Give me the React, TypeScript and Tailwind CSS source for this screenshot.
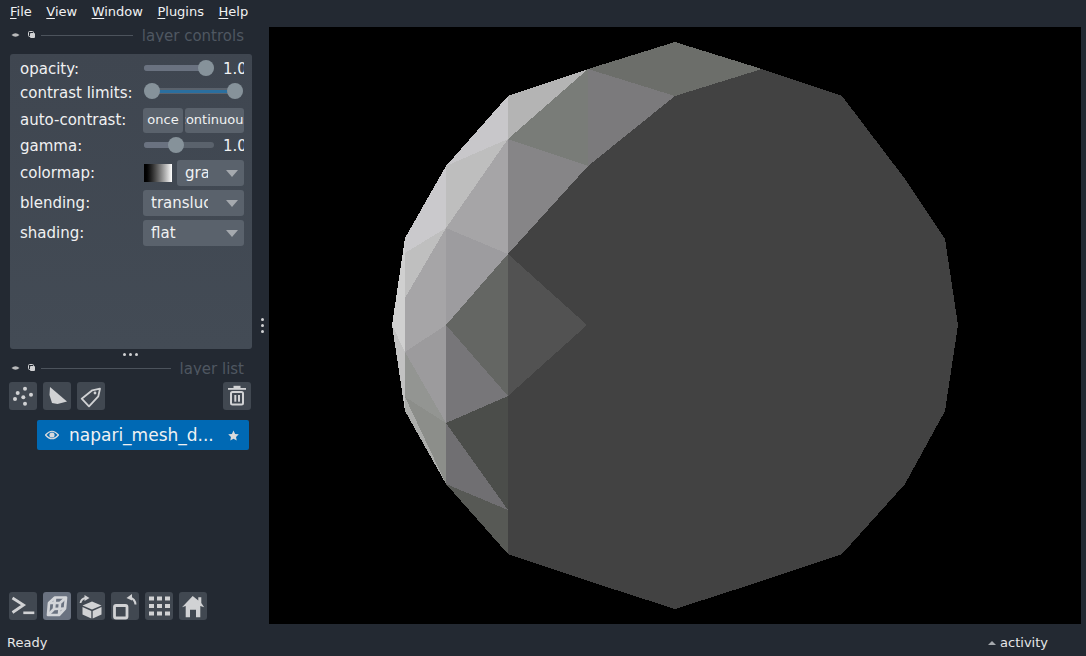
import type { ReactNode } from 'react';

const faces: [string, string][] = [
  ['588,69 675,42 762,69 675,96', '#6c6e6a'],
  ['588,69 675,96 588,166', '#7b7a7c'],
  ['508,139 588,69 588,166', '#797c78'],
  ['508,96 588,69 508,139', '#b4b4b4'],
  ['446,166 508,96 508,139', '#c8c7ca'],
  ['446,166 508,139 446,228', '#bebebe'],
  ['446,228 508,139 508,254', '#a6a5a7'],
  ['508,139 588,166 508,254', '#868587'],
  ['405,238 446,166 446,228 405,253', '#cac9cc'],
  ['405,253 446,228 405,298', '#bfbfbf'],
  ['405,298 446,228 446,325', '#a6a5a7'],
  ['446,228 508,254 446,325', '#9d9c9f'],
  ['446,325 508,254 508,396', '#646663'],
  ['508,254 587,325 508,396', '#525252'],
  ['405,298 446,325 405,352', '#a6a5a7'],
  ['392,325 405,238 405,352', '#d0d0d0'],
  ['405,352 446,325 446,423', '#9c9b9d'],
  ['446,325 508,396 446,423', '#777679'],
  ['405,352 446,423 405,397', '#939592'],
  ['392,325 405,352 405,397 405,411', '#c2c2c2'],
  ['405,397 446,423 446,484', '#8c8e8a'],
  ['405,397 446,484 405,411', '#acadab'],
  ['446,423 508,396 508,510', '#4b4d4a'],
  ['446,423 508,510 446,484', '#706f72'],
  ['446,484 508,510 508,554', '#575955'],
];

const outline =
  '675,42 762,69 842,96 905,179 945,239 958,325 945,411 905,484 842,554 762,581 675,609 588,581 508,554 446,484 405,411 392,325 405,238 446,166 508,96 588,69';

function MenuItem({ mark, rest }: { mark: string; rest: string }) {
  return (
    <span>
      <span className="underline underline-offset-2">{mark}</span>
      {rest}
    </span>
  );
}

function Glyph({ children, active }: { children: ReactNode; active?: boolean }) {
  return (
    <button className={`w-[28px] h-[28px] rounded-[3px] flex items-center justify-center ${active ? 'bg-[#6a7280]' : 'bg-[#414851]'}`}>
      <svg width="28" height="28" viewBox="0 0 28 28" fill="#d1d2d4">
        {children}
      </svg>
    </button>
  );
}

function Row({ label, className, children }: { label: string; className: string; children: ReactNode }) {
  return (
    <div className={`flex items-center ${className}`}>
      <span className="w-[123px] shrink-0 whitespace-nowrap">{label}</span>
      {children}
    </div>
  );
}

function Slider({ value, shown }: { value: number; shown: string }) {
  return (
    <>
      <div className="relative ml-[1px] mb-[2px] w-[70px] h-[6px] rounded-full bg-[#5a626c] shrink-0">
        <div className="h-full rounded-full bg-[#6a7280]" style={{ width: value }} />
        <div className="absolute top-[-5px] w-[16px] h-[16px] rounded-full bg-[#86929a]" style={{ left: value - 8 }} />
      </div>
      <div className="ml-[9px] w-[21px] overflow-hidden whitespace-nowrap">{shown}</div>
    </>
  );
}

function Combo({ text, textWidth, className }: { text: string; textWidth: string; className: string }) {
  return (
    <div className={`h-[26px] rounded-[3px] bg-[#5a626c] flex items-center justify-end pr-[6px] ${className}`}>
      <span className={`overflow-hidden whitespace-nowrap mr-[18px] ${textWidth}`}>{text}</span>
      <span className="shrink-0 w-0 h-0 border-l-[6.5px] border-r-[6.5px] border-t-[7px] border-l-transparent border-r-transparent border-t-[#a5a9ae]" />
    </div>
  );
}

function SectionTitle({ title, lineWidth, className }: { title: string; lineWidth: string; className: string }) {
  return (
    <div className={`flex items-start pl-[11px] pr-[11px] h-[14px] overflow-hidden ${className}`}>
      <svg width="30" height="15" viewBox="0 0 30 15" className="shrink-0" fill="#b9babb">
        <path d="M0.5 7 Q4.5 3.5 8.5 7 Q4.5 10.5 0.5 7Z" />
        <rect x="17.5" y="3.5" width="5" height="5" rx="1" fill="none" stroke="#d1d2d4" strokeWidth="1" />
        <rect x="19" y="5" width="5" height="5" rx="1" fill="#d1d2d4" />
      </svg>
      <div className={`h-px bg-[#4c535c] mt-[7px] ${lineWidth}`} />
      <span className="ml-auto mt-[-1px] text-[15px] leading-[19px] text-[#4f5761] whitespace-nowrap">{title}</span>
    </div>
  );
}

export default function App() {
  return (
    <div className="w-[1086px] h-[656px] overflow-hidden flex flex-col bg-[#232932] text-[#f0f1f2] text-[15px] font-['DejaVu_Sans',sans-serif]">
      <div className="h-[27px] shrink-0 flex items-center gap-[14.5px] pl-[10px] text-[13px] pb-[4px]">
        <MenuItem mark="F" rest="ile" />
        <MenuItem mark="V" rest="iew" />
        <MenuItem mark="W" rest="indow" />
        <MenuItem mark="P" rest="lugins" />
        <MenuItem mark="H" rest="elp" />
      </div>

      <div className="flex-1 min-h-0 flex">
        <div className="w-[255px] shrink-0 flex flex-col">
          <SectionTitle title="layer controls" lineWidth="w-[92px]" className="mt-[1px] mb-[12px]" />

          <div className="mx-[10px] w-[242px] h-[295px] rounded-[3px] bg-gradient-to-b from-[#3f4650] to-[#434b55] pl-[10px] pr-[8px] pt-[3px]">
            <Row label="opacity:" className="h-[24px]">
              <Slider value={62} shown="1.00" />
            </Row>
            <Row label="contrast limits:" className="h-[22px] mt-[1px]">
              <div className="relative ml-[1px] mb-[4px] w-[99px] h-[6px] rounded-full bg-[#5a626c] shrink-0">
                <div className="absolute left-[8px] right-[8px] top-[1.5px] h-[3px] bg-[#2b6f9f]" />
                <div className="absolute left-0 top-[-5px] w-[16px] h-[16px] rounded-full bg-[#86929a]" />
                <div className="absolute left-[83px] top-[-5px] w-[16px] h-[16px] rounded-full bg-[#86929a]" />
              </div>
            </Row>
            <Row label="auto-contrast:" className="h-[26px] mt-[3px]">
              <div className="flex gap-[2px] text-[13px]">
                <div className="w-[40px] h-[25px] rounded-[3px] bg-[#5a626c] flex items-center justify-center">once</div>
                <div className="w-[59px] h-[25px] rounded-[3px] bg-[#5a626c] flex items-center justify-center overflow-hidden">
                  <span className="shrink-0">continuous</span>
                </div>
              </div>
            </Row>
            <Row label="gamma:" className="h-[26px]">
              <Slider value={32} shown="1.00" />
            </Row>
            <Row label="colormap:" className="h-[26px] mt-[1px]">
              <div className="ml-[1px] w-[28px] h-[18px] bg-gradient-to-r from-black to-white" />
              <Combo text="gra" textWidth="w-[23px]" className="w-[67px] ml-[5px]" />
            </Row>
            <Row label="blending:" className="h-[26px] mt-[4px]">
              <Combo text="transluc" textWidth="w-[57px]" className="w-[101px]" />
            </Row>
            <Row label="shading:" className="h-[26px] mt-[4px]">
              <Combo text="flat" textWidth="w-[57px]" className="w-[101px]" />
            </Row>
          </div>

          <div className="h-[11px] flex items-center justify-center gap-[3px] ml-[5px]">
            <span className="w-[3px] h-[3px] rounded-full bg-[#d1d2d4]" />
            <span className="w-[3px] h-[3px] rounded-full bg-[#d1d2d4]" />
            <span className="w-[3px] h-[3px] rounded-full bg-[#d1d2d4]" />
          </div>

          <SectionTitle title="layer list" lineWidth="w-[130px]" className="mt-[1px] mb-[7px]" />

          <div className="flex pl-[9px] pr-[4px] gap-[6px]">
            <Glyph>
              <circle cx="16" cy="6.7" r="2" />
              <circle cx="8.7" cy="11" r="2" />
              <circle cx="22" cy="12.7" r="2" />
              <circle cx="6" cy="17" r="2" />
              <circle cx="14.3" cy="15.3" r="2" />
              <circle cx="16" cy="21.7" r="2" />
            </Glyph>
            <Glyph>
              <polygon points="7,5 24,19.5 14.5,22 9,21 6.5,13" />
            </Glyph>
            <Glyph>
              <path d="M4.7 16.7 L15.3 8.3 L23 6.7 L21.3 14.3 L12 24.3 Z" fill="none" stroke="#d1d2d4" strokeWidth="1.8" strokeLinejoin="round" />
              <circle cx="18" cy="11" r="1.4" />
            </Glyph>
            <div className="ml-auto">
              <Glyph>
                <rect x="5" y="6" width="18" height="1.8" />
                <rect x="10.5" y="3.8" width="7" height="2.2" />
                <rect x="8" y="10" width="12" height="12.5" rx="1.5" fill="none" stroke="#d1d2d4" strokeWidth="2" />
                <rect x="11.3" y="13" width="2" height="6.7" />
                <rect x="15" y="13" width="2" height="6.7" />
              </Glyph>
            </div>
          </div>

          <div className="ml-[37px] w-[212px] h-[30px] mt-[10px] rounded-[2px] bg-[#0069b4] flex items-center pl-[8px] pr-[10px]">
            <svg width="14" height="10" viewBox="0 0 14 10" className="shrink-0">
              <path d="M0.5 5 Q7 -2.5 13.5 5 Q7 12.5 0.5 5Z" fill="none" stroke="#d9dadc" strokeWidth="1.2" />
              <circle cx="7" cy="5" r="2.6" fill="#d9dadc" />
            </svg>
            <span className="ml-[10px] mt-[2px] text-[17px] whitespace-nowrap flex-1">napari_mesh_d...</span>
            <svg width="11" height="11" viewBox="0 0 24 24" fill="#d9dadc" className="shrink-0">
              <polygon points="12,1 15.5,8.5 23.5,9.5 17.5,15 19,23 12,19 5,23 6.5,15 0.5,9.5 8.5,8.5" />
            </svg>
          </div>

          <div className="mt-auto mb-[4px] flex pl-[9px] gap-[6px]">
            <Glyph>
              <path d="M3.5 6 L14.5 13 L3.5 20.5" fill="none" stroke="#d1d2d4" strokeWidth="2.8" />
              <rect x="14.3" y="19.5" width="11" height="2.6" />
            </Glyph>
            <Glyph active>
              <g fill="none" stroke="#d3d5d9" strokeWidth="2.7" strokeLinejoin="round">
                <path d="M6 11 L12 5.5 L23 5.5 L22 16.5 L16 23 L5 23 Z" />
                <path d="M6 11 L17 11 L16 23 M17 11 L23 5.5" />
                <path d="M12 5.5 L11 17 L5 23 M11 17 L22 16.5" />
              </g>
            </Glyph>
            <Glyph>
              <polygon points="15,9.5 24.5,13.5 15,17.5 5.5,13.5" />
              <polygon points="5.5,15 14.3,19 14.3,26.5 5.5,22.5" />
              <polygon points="15.7,19 24.5,15 24.5,22.5 15.7,26.5" />
              <path d="M3.5 11 Q4 7 8.5 6" fill="none" stroke="#d1d2d4" strokeWidth="1.8" />
              <polygon points="7.5,3 12.5,6 7.5,9" />
            </Glyph>
            <Glyph>
              <rect x="3.5" y="13.5" width="12.5" height="12.5" rx="1.5" fill="none" stroke="#d1d2d4" strokeWidth="2.8" />
              <path d="M24.5 12.5 Q24 7 19 5.5" fill="none" stroke="#d1d2d4" strokeWidth="2" />
              <polygon points="21,2 15.5,6 21,8.5" />
            </Glyph>
            <Glyph>
              <rect x="4" y="4.5" width="5" height="4" />
              <rect x="12" y="4.5" width="5" height="4" />
              <rect x="20" y="4.5" width="5" height="4" />
              <rect x="4" y="12" width="5" height="4" />
              <rect x="12" y="12" width="5" height="4" />
              <rect x="20" y="12" width="5" height="4" />
              <rect x="4" y="19.5" width="5" height="4" />
              <rect x="12" y="19.5" width="5" height="4" />
              <rect x="20" y="19.5" width="5" height="4" />
            </Glyph>
            <Glyph>
              <path d="M13.7 4 L19.3 8.5 L19.3 5.3 L22.3 5.3 L22.3 11 L25.2 15.3 L21.3 14 L21.3 25.3 L17 25.3 L17 17.7 L11 17.7 L11 25.3 L6.7 25.3 L6.7 14 L3 15.3 Z" />
            </Glyph>
          </div>
        </div>

        <div className="w-[14px] shrink-0 flex flex-col items-center justify-center gap-[3px] pl-[1px]">
          <span className="w-[3px] h-[3px] rounded-full bg-[#d1d2d4]" />
          <span className="w-[3px] h-[3px] rounded-full bg-[#d1d2d4]" />
          <span className="w-[3px] h-[3px] rounded-full bg-[#d1d2d4]" />
        </div>

        <div className="w-[812px] shrink-0 bg-black">
          <svg width="812" height="597" viewBox="269 27 812 597" shapeRendering="crispEdges" className="block">
            <polygon points={outline} fill="#424242" />
            {faces.map(([pts, fill]) => (
              <polygon key={pts} points={pts} fill={fill} />
            ))}
          </svg>
        </div>
      </div>

      <div className="h-[32px] shrink-0 flex items-center pl-[7px] pr-[38px] pt-[5px] text-[13px] text-[#e6e7e8]">
        <span>Ready</span>
        <span className="ml-auto flex items-center gap-[4px]">
          <span className="w-0 h-0 border-l-[4px] border-r-[4px] border-b-[4px] border-l-transparent border-r-transparent border-b-[#a5a9ae]" />
          activity
        </span>
      </div>
    </div>
  );
}
